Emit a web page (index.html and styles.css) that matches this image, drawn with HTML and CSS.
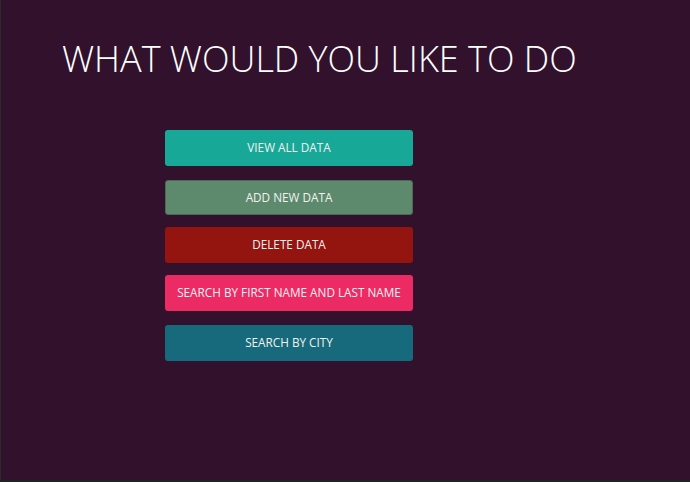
FILE: index.html
```html
<!DOCTYPE html>
<html>
<head>
<meta charset="utf-8">
<link rel="stylesheet" href="styles.css">
</head>
<body>
<div class="frame">
  <h1 class="title">WHAT WOULD YOU LIKE TO DO</h1>
  <div class="menu">
    <button class="btn btn-view">VIEW ALL DATA</button>
    <button class="btn btn-add">ADD NEW DATA</button>
    <button class="btn btn-delete">DELETE DATA</button>
    <button class="btn btn-search">SEARCH BY FIRST NAME AND LAST NAME</button>
    <button class="btn btn-city">SEARCH BY CITY</button>
  </div>
</div>
</body>
</html>
```
FILE: styles.css
```css
html, body {
  margin: 0;
  padding: 0;
  height: 100%;
  background: #1f2324;
}
.frame {
  box-sizing: border-box;
  height: 480px;
  background: #32112c;
  border-left: 1px solid #2a2a2a;
  display: flex;
  flex-direction: column;
}
.title {
  margin: 39px 0 0 61px;
  font-family: "Open Sans", sans-serif;
  font-weight: 300;
  font-size: 36px;
  line-height: 40px;
  color: #ffffff;
  letter-spacing: 0;
}
.menu {
  margin: 51px 0 0 164px;
  display: flex;
  flex-direction: column;
  width: 248px;
}
.btn {
  height: 36px;
  border: none;
  border-radius: 3px;
  font-family: "Open Sans", sans-serif;
  font-size: 11.75px;
  line-height: 14px;
  color: #f2f2f2;
  padding: 0 0 2px 0;
  margin: 0;
}
.btn-view { background: #17a898; }
.btn-add { background: #5d8a6c; border: 1px solid #4a6a56; height: 35px; margin-top: 14px; }
.btn-delete { background: #94140f; margin-top: 12px; }
.btn-search { background: #ec2a64; margin-top: 12px; }
.btn-city { background: #176a7b; margin-top: 14px; }
```
